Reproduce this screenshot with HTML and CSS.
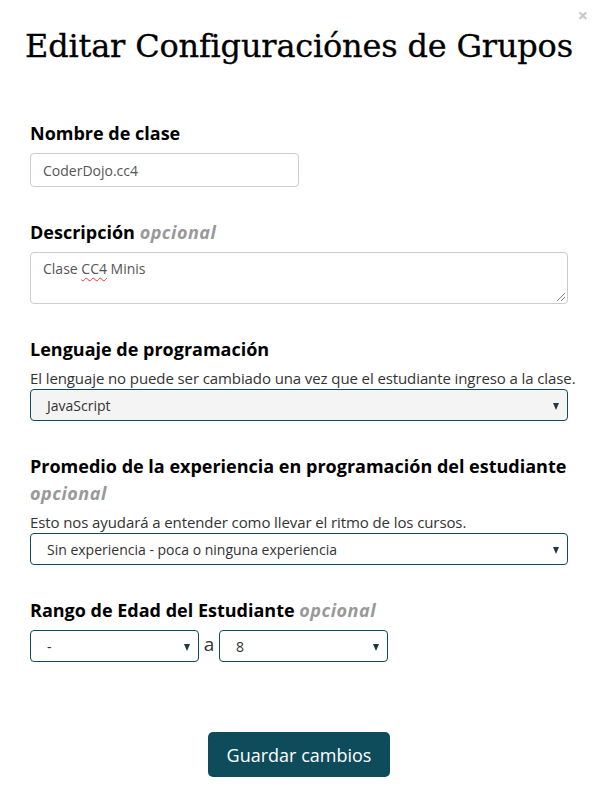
FILE: index.html
```html
<!DOCTYPE html>
<html lang="es">
<head>
<meta charset="utf-8">
<link rel="stylesheet" href="styles.css">
</head>
<body>
<div class="modal">
  <button class="close" type="button">×</button>
  <h1 class="title">Editar Configuraciónes de Grupos</h1>
  <form class="form">
    <div class="group">
      <label class="label">Nombre de clase</label>
      <input class="input name" type="text" value="CoderDojo.cc4">
    </div>
    <div class="group">
      <label class="label">Descripción <em class="opt">opcional</em></label>
      <div class="textarea"><span class="sp">Clase </span><span class="typo">CC4</span><span class="sp"> Minis</span><span class="grip"></span></div>
    </div>
    <div class="group">
      <label class="label">Lenguaje de programación</label>
      <div class="help">El lenguaje no puede ser cambiado una vez que el estudiante ingreso a la clase.</div>
      <div class="select disabled"><span>JavaScript</span></div>
    </div>
    <div class="group">
      <label class="label">Promedio de la experiencia en programación del estudiante <em class="opt">opcional</em></label>
      <div class="help">Esto nos ayudará a entender como llevar el ritmo de los cursos.</div>
      <div class="select"><span>Sin experiencia - poca o ninguna experiencia</span></div>
    </div>
    <div class="group">
      <label class="label">Rango de Edad del Estudiante <em class="opt">opcional</em></label>
      <div class="range">
        <div class="select small"><span>-</span></div>
        <span class="a">a</span>
        <div class="select small"><span>8</span></div>
      </div>
    </div>
    <div class="actions">
      <button class="save" type="button">Guardar cambios</button>
    </div>
  </form>
</div>
</body>
</html>
```
FILE: styles.css
```css
* { box-sizing: border-box; }
html, body { margin: 0; padding: 0; background: #fff; }
body { font-family: "Open Sans", "Noto Sans", sans-serif; color: #000; }
.modal { position: relative; width: 598px; height: 807px; padding: 0 30px; }
.close {
  position: absolute; top: 6px; right: 10px;
  background: none; border: 0; padding: 0;
  font-family: "Open Sans", sans-serif; font-size: 18px; line-height: 18px;
  color: #c8c8c8; font-weight: 700;
}
.title {
  margin: 0 -30px; padding-top: 24px; height: 86px; white-space: nowrap;
  text-align: center; font-family: "DejaVu Serif", serif; font-weight: 400;
  font-size: 32px; line-height: 44px; letter-spacing: -0.2px; color: #000;
  -webkit-text-stroke: 0.3px #000;
}
.form { display: flex; flex-direction: column; padding-top: 34px; }
.group { display: flex; flex-direction: column; margin-bottom: 32px; }
.label { font-size: 18px; font-weight: 700; line-height: 27px; margin-bottom: 6px; }
.opt { color: #999; font-style: italic; font-weight: 700; letter-spacing: 0.5px; }
.help { font-size: 15px; line-height: 20px; color: #333; margin-top: -1px; margin-bottom: 1px; white-space: nowrap; letter-spacing: -0.1px; }
.input {
  font-family: inherit; font-size: 14px; color: #555;
  height: 34px; border: 1px solid #ccc; border-radius: 4px; padding: 0 12px;
  outline: none;
}
.name { width: 269px; }
.textarea {
  position: relative; height: 52px; border: 1px solid #ccc; border-radius: 4px;
  padding: 6px 12px; font-size: 14px; line-height: 20px; color: #555;
  white-space: pre;
}
.typo { text-decoration: underline wavy #e33; text-decoration-thickness: 1px; text-underline-offset: 3px; }
.grip {
  position: absolute; right: 2px; bottom: 2px; width: 8px; height: 8px;
  background: linear-gradient(135deg, transparent 45%, #888 45%, #888 55%, transparent 55%, transparent 70%, #888 70%, #888 80%, transparent 80%);
}
.select {
  position: relative; height: 32px; border: 1px solid #0e4c5c; border-radius: 4px;
  padding: 0 16px; font-size: 14px; color: #333; display: flex; align-items: center;
  background: #fff;
}
.select.disabled { background: #f4f4f4; }
.select::after {
  content: ""; position: absolute; right: 8px; top: 13px;
  border-left: 3.5px solid transparent; border-right: 3.5px solid transparent;
  border-top: 7px solid #1b3a44;
}
.range { display: flex; align-items: center; }
.small { width: 169px; }
.a { font-size: 19px; color: #333; width: 20px; text-align: center; line-height: 20px; margin-top: -4px; }
.actions { display: flex; justify-content: center; padding-top: 38px; }
.save {
  background: #0e4c5c; color: #fff; border: 0; border-radius: 5px;
  font-family: "Open Sans", sans-serif; font-size: 18px; height: 45px; width: 182px;
  padding: 0;
}
```
